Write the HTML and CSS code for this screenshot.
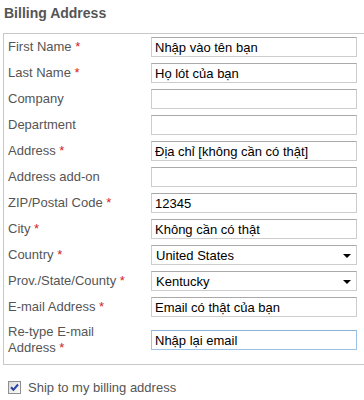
FILE: index.html
```html
<!DOCTYPE html>
<html lang="vi">
<head>
    <meta charset="UTF-8" />
    <meta name="viewport" content="width=device-width, initial-scale=1.0" />
    <title>Billing Address</title>
    <link rel="stylesheet" href="styles.css">
</head>
<body>

<h2 class="title">Billing Address</h2>

<fieldset class="billing">
    <div class="row">
        <label>First Name <span class="req">*</span></label>
        <input type="text" value="Nhập vào tên bạn">
    </div>
    <div class="row">
        <label>Last Name <span class="req">*</span></label>
        <input type="text" value="Họ lót của bạn">
    </div>
    <div class="row">
        <label>Company</label>
        <input type="text">
    </div>
    <div class="row">
        <label>Department</label>
        <input type="text">
    </div>
    <div class="row">
        <label>Address <span class="req">*</span></label>
        <input type="text" value="Địa chỉ [không cần có thật]">
    </div>
    <div class="row">
        <label>Address add-on</label>
        <input type="text">
    </div>
    <div class="row">
        <label>ZIP/Postal Code <span class="req">*</span></label>
        <input type="text" value="12345">
    </div>
    <div class="row">
        <label>City <span class="req">*</span></label>
        <input type="text" value="Không cần có thật">
    </div>
    <div class="row">
        <label>Country <span class="req">*</span></label>
        <div class="select-wrap">
            <select>
                <option>United States</option>
            </select>
        </div>
    </div>
    <div class="row">
        <label>Prov./State/County <span class="req">*</span></label>
        <div class="select-wrap">
            <select>
                <option>Kentucky</option>
            </select>
        </div>
    </div>
    <div class="row">
        <label>E-mail Address <span class="req">*</span></label>
        <input type="text" value="Email có thật của bạn">
    </div>
    <div class="row row-tall">
        <label>Re-type E-mail Address <span class="req">*</span></label>
        <input type="text" class="active" value="Nhập lại email">
    </div>
</fieldset>

<label class="ship">
    <span class="check">
        <svg width="9" height="9" viewBox="0 0 9 9">
            <path d="M1 4.2 L3.4 6.8 L8 1.5" fill="none" stroke="#2b3fa8" stroke-width="2"/>
        </svg>
    </span>
    Ship to my billing address
</label>

</body>
</html>
```

FILE: styles.css
```css
* {
    margin: 0;
    padding: 0;
    box-sizing: border-box;
}
body {
    font-family: "Liberation Sans", Arial, sans-serif;
    font-size: 13px;
    color: #555;
    background: #fff;
    width: 364px;
    overflow: hidden;
    padding: 0 0 0 3px;
}
.title {
    font-size: 14px;
    font-weight: bold;
    color: #555;
    line-height: 18px;
    padding: 4px 0 0 1px;
    height: 33px;
}
.billing {
    border: 1px solid #c8c8c8;
    border-right: none;
    width: 420px;
    padding: 3px 0 8px 4px;
    display: flex;
    flex-direction: column;
    gap: 6px;
}
.row {
    display: grid;
    grid-template-columns: 143px 206px;
    align-items: center;
}
.row label {
    line-height: 16px;
    max-width: 128px;
}
.row-tall {
    padding-top: 1px;
}
.req {
    color: #d21e1e;
}
.row input[type="text"],
.row select {
    height: 20px;
    width: 206px;
    border: 1px solid #cdcdcd;
    border-top-color: #a9a9a9;
    font-family: "Liberation Sans", Arial, sans-serif;
    font-size: 13px;
    color: #000;
    padding: 0 3px;
    background: #fff;
    outline: none;
}
.row input.active {
    border-color: #9cc3e6;
    border-top-color: #8ab3da;
}
.select-wrap {
    position: relative;
    width: 206px;
}
.row select {
    appearance: none;
    -webkit-appearance: none;
    padding-left: 4px;
    border-radius: 0;
}
.select-wrap::after {
    content: "";
    position: absolute;
    right: 6px;
    top: 9px;
    border-left: 4px solid transparent;
    border-right: 4px solid transparent;
    border-top: 4px solid #000;
}
.ship {
    display: flex;
    align-items: center;
    gap: 7px;
    padding: 15px 0 0 5px;
    color: #555;
    font-size: 13px;
}
.check {
    width: 13px;
    height: 13px;
    border: 1px solid #8e8f8f;
    background: linear-gradient(135deg, #dcdcdc, #fbfbfb);
    display: flex;
    align-items: center;
    justify-content: center;
}
```
